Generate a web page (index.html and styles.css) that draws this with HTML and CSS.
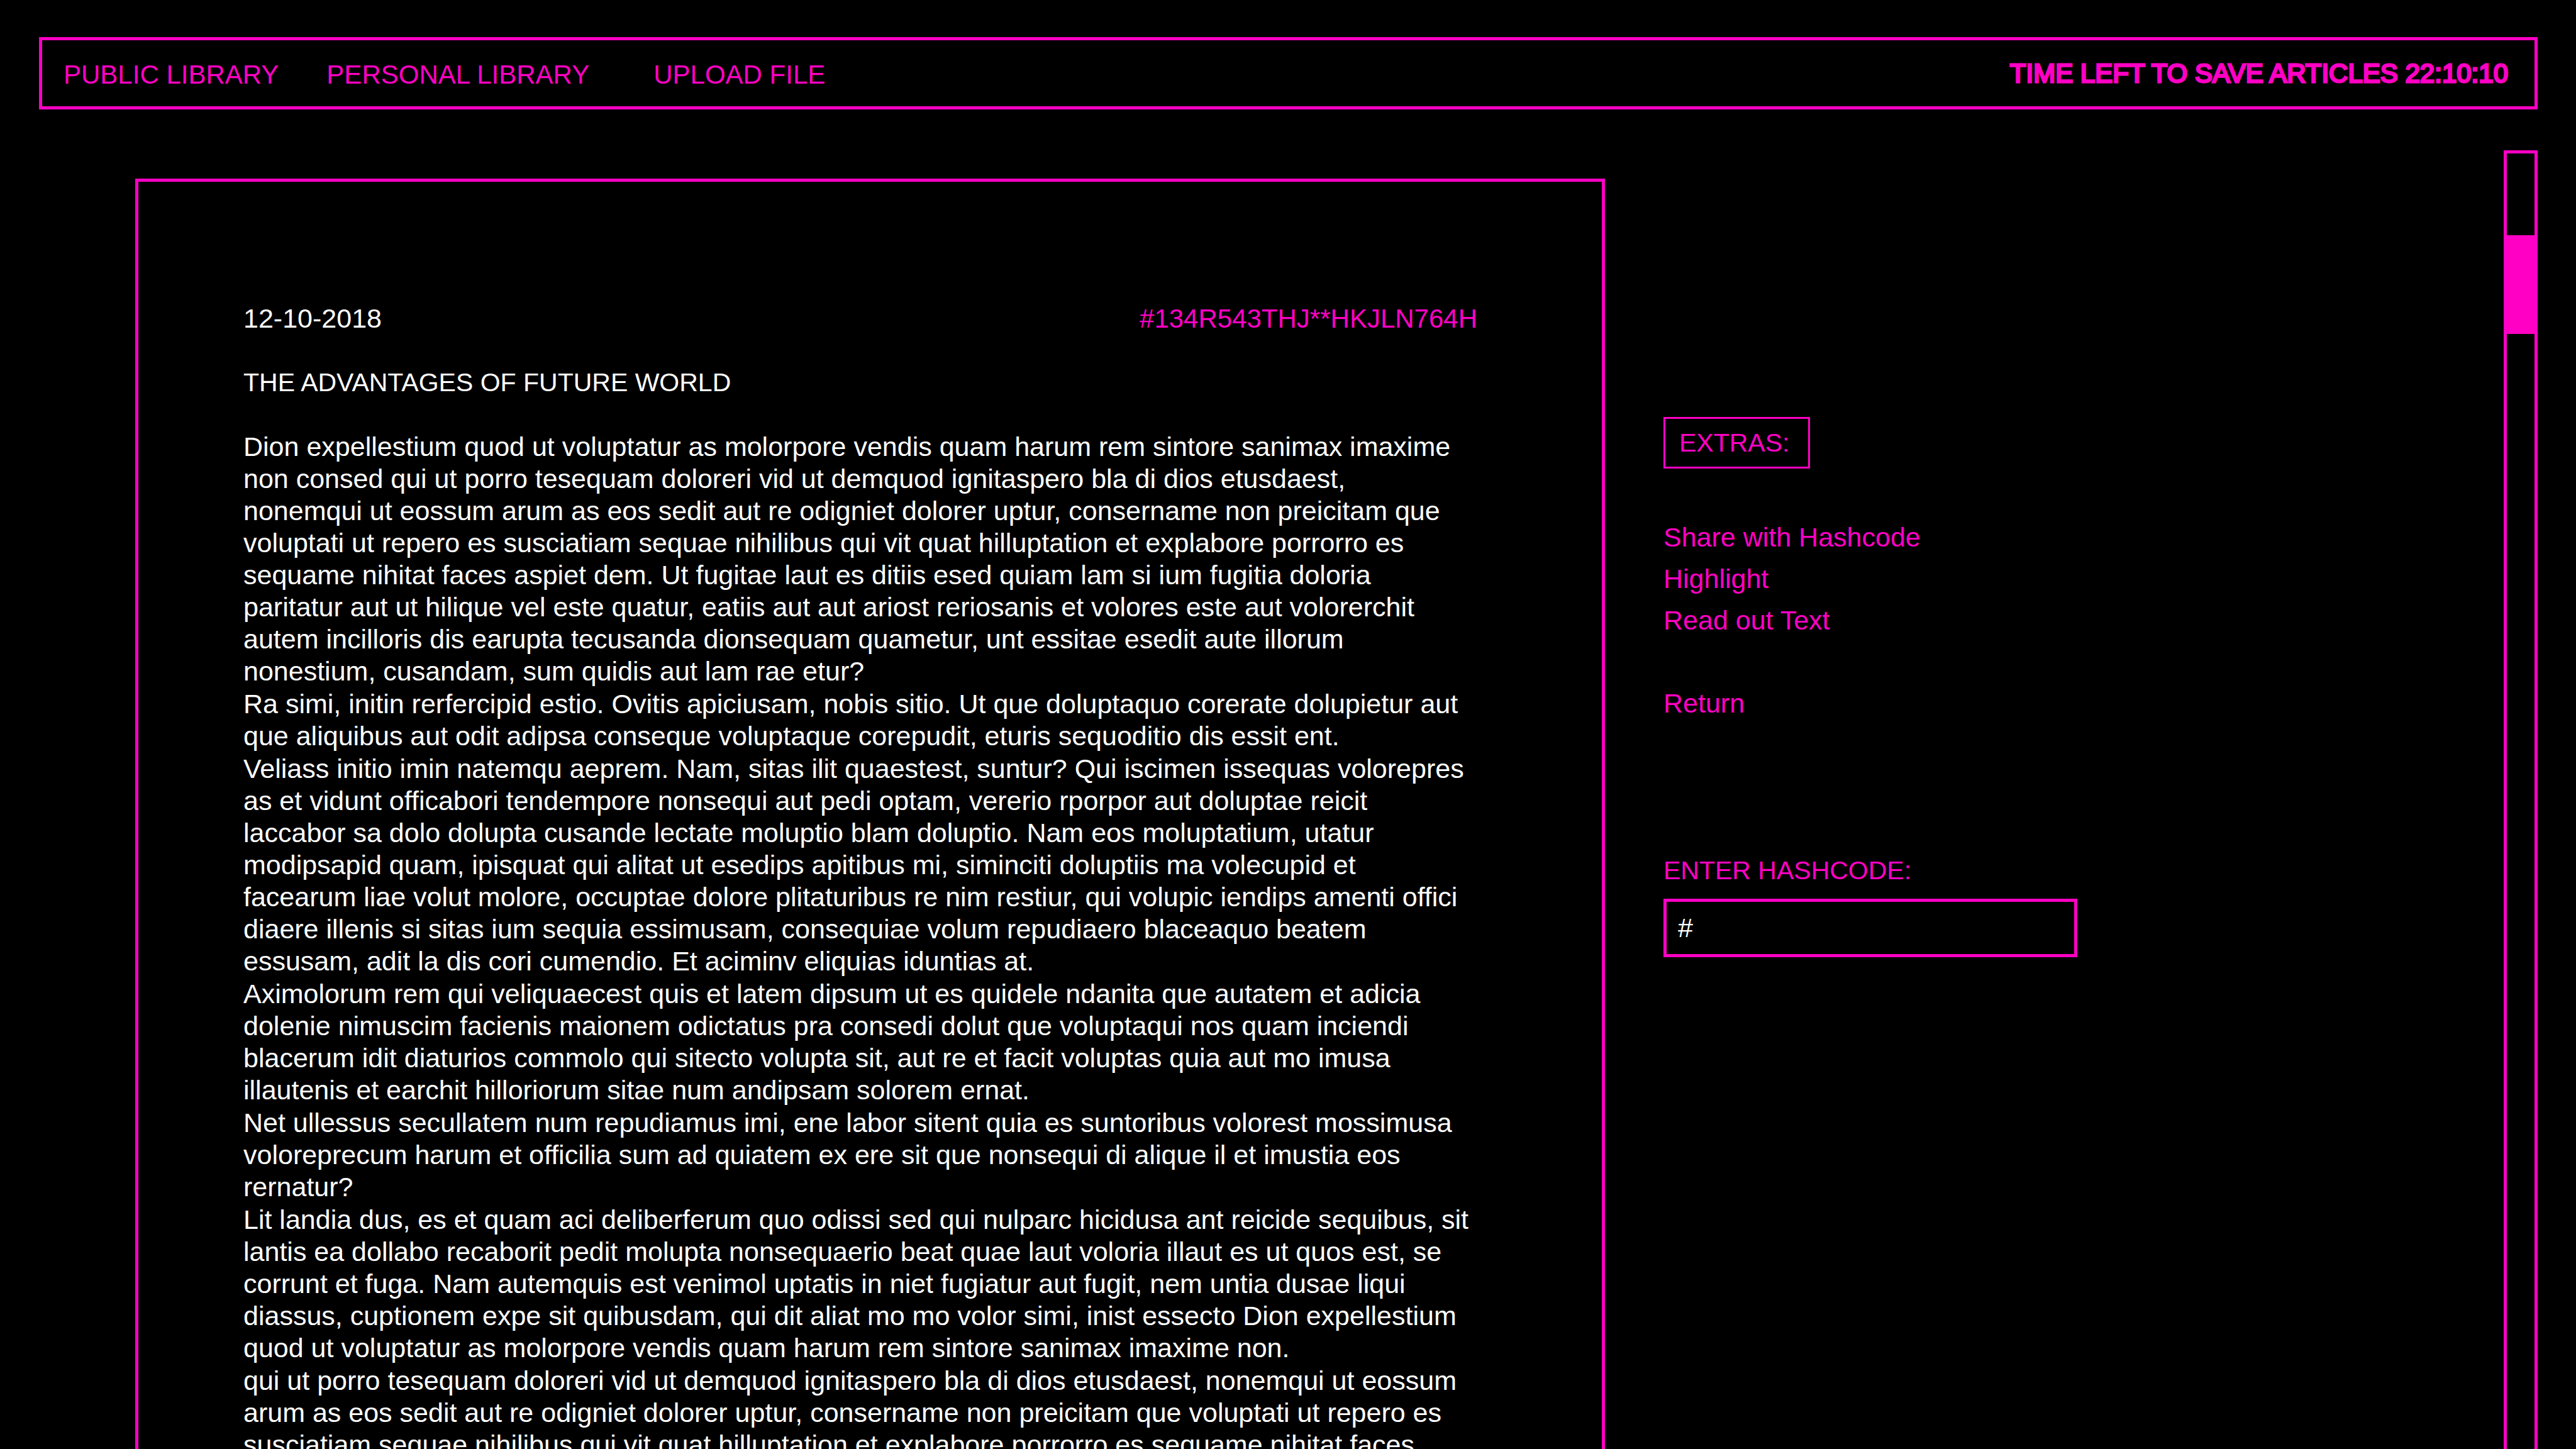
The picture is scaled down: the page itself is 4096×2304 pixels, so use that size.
FILE: index.html
```html
<!DOCTYPE html>
<html lang="en">
<head>
<meta charset="utf-8">
<title>The Advantages of Future World</title>
<link rel="stylesheet" href="styles.css">
</head>
<body class="page">
<header class="topbar">
  <nav class="topnav">
    <a class="topnav-link" href="#public">PUBLIC LIBRARY</a>
    <a class="topnav-link" href="#personal">PERSONAL LIBRARY</a>
    <a class="topnav-link topnav-upload" href="#upload">UPLOAD FILE</a>
  </nav>
  <p class="countdown">TIME LEFT TO SAVE ARTICLES 22:10:10</p>
</header>
<main class="workspace">
  <article class="article">
    <div class="article-meta">
      <time datetime="2018-10-12">12-10-2018</time>
      <span class="hashcode">#134R543THJ**HKJLN764H</span>
    </div>
    <h1 class="article-title">THE ADVANTAGES OF FUTURE WORLD</h1>
    <div class="article-body">
      <p>Dion expellestium quod ut voluptatur as molorpore vendis quam harum rem sintore sanimax imaxime<br>
      non consed qui ut porro tesequam doloreri vid ut demquod ignitaspero bla di dios etusdaest,<br>
      nonemqui ut eossum arum as eos sedit aut re odigniet dolorer uptur, consername non preicitam que<br>
      voluptati ut repero es susciatiam sequae nihilibus qui vit quat hilluptation et explabore porrorro es<br>
      sequame nihitat faces aspiet dem. Ut fugitae laut es ditiis esed quiam lam si ium fugitia doloria<br>
      paritatur aut ut hilique vel este quatur, eatiis aut aut ariost reriosanis et volores este aut volorerchit<br>
      autem incilloris dis earupta tecusanda dionsequam quametur, unt essitae esedit aute illorum<br>
      nonestium, cusandam, sum quidis aut lam rae etur?</p>
      <p>Ra simi, initin rerfercipid estio. Ovitis apiciusam, nobis sitio. Ut que doluptaquo corerate dolupietur aut<br>
      que aliquibus aut odit adipsa conseque voluptaque corepudit, eturis sequoditio dis essit ent.</p>
      <p>Veliass initio imin natemqu aeprem. Nam, sitas ilit quaestest, suntur? Qui iscimen issequas volorepres<br>
      as et vidunt officabori tendempore nonsequi aut pedi optam, vererio rporpor aut doluptae reicit<br>
      laccabor sa dolo dolupta cusande lectate moluptio blam doluptio. Nam eos moluptatium, utatur<br>
      modipsapid quam, ipisquat qui alitat ut esedips apitibus mi, siminciti doluptiis ma volecupid et<br>
      facearum liae volut molore, occuptae dolore plitaturibus re nim restiur, qui volupic iendips amenti offici<br>
      diaere illenis si sitas ium sequia essimusam, consequiae volum repudiaero blaceaquo beatem<br>
      essusam, adit la dis cori cumendio. Et aciminv eliquias iduntias at.</p>
      <p>Aximolorum rem qui veliquaecest quis et latem dipsum ut es quidele ndanita que autatem et adicia<br>
      dolenie nimuscim facienis maionem odictatus pra consedi dolut que voluptaqui nos quam inciendi<br>
      blacerum idit diaturios commolo qui sitecto volupta sit, aut re et facit voluptas quia aut mo imusa<br>
      illautenis et earchit hilloriorum sitae num andipsam solorem ernat.</p>
      <p>Net ullessus secullatem num repudiamus imi, ene labor sitent quia es suntoribus volorest mossimusa<br>
      voloreprecum harum et officilia sum ad quiatem ex ere sit que nonsequi di alique il et imustia eos<br>
      rernatur?</p>
      <p>Lit landia dus, es et quam aci deliberferum quo odissi sed qui nulparc hicidusa ant reicide sequibus, sit<br>
      lantis ea dollabo recaborit pedit molupta nonsequaerio beat quae laut voloria illaut es ut quos est, se<br>
      corrunt et fuga. Nam autemquis est venimol uptatis in niet fugiatur aut fugit, nem untia dusae liqui<br>
      diassus, cuptionem expe sit quibusdam, qui dit aliat mo mo volor simi, inist essecto Dion expellestium<br>
      quod ut voluptatur as molorpore vendis quam harum rem sintore sanimax imaxime non.</p>
      <p>qui ut porro tesequam doloreri vid ut demquod ignitaspero bla di dios etusdaest, nonemqui ut eossum<br>
      arum as eos sedit aut re odigniet dolorer uptur, consername non preicitam que voluptati ut repero es<br>
      susciatiam sequae nihilibus qui vit quat hilluptation et explabore porrorro es sequame nihitat faces</p>
    </div>
  </article>
  <aside class="sidebar">
    <h2 class="extras-title">EXTRAS:</h2>
    <ul class="extras-list">
      <li><a href="#share">Share with Hashcode</a></li>
      <li><a href="#highlight">Highlight</a></li>
      <li><a href="#read">Read out Text</a></li>
      <li class="extras-return"><a href="#return">Return</a></li>
    </ul>
    <form class="hash-form">
      <label class="hash-label" for="hash">ENTER HASHCODE:</label>
      <input class="hash-input" id="hash" type="text" value="#">
    </form>
  </aside>
  <div class="scroller"><div class="scroller-thumb"></div></div>
</main>
</body>
</html>
```

FILE: styles.css
```css
:root {
  --pink: #ff00c4;
}

* {
  box-sizing: border-box;
}

.page {
  display: flex;
  flex-direction: column;
  height: 100vh;
  margin: 0;
  padding: 59px 61px 0 62px;
  overflow: hidden;
  background: #000;
  color: #fff;
  font: 43px/51px "Liberation Sans", Arial, sans-serif;
}

a {
  color: inherit;
  text-decoration: none;
}

h1, h2, p, ul {
  margin: 0;
  padding: 0;
  font-size: inherit;
  font-weight: normal;
}

/* Top bar */
.topbar {
  display: flex;
  justify-content: space-between;
  align-items: center;
  flex: none;
  padding: 27px 42px 23px 34px;
  border: 5px solid var(--pink);
  color: var(--pink);
  font-size: 42px;
}

.topnav {
  display: flex;
  gap: 76px;
}

.topnav-upload {
  margin-left: 26px;
}

.countdown {
  padding-bottom: 4px;
  -webkit-text-stroke: 3px var(--pink);
}

/* Reading area */
.workspace {
  display: grid;
  grid-template-columns: minmax(0, 2337px) minmax(0, 1fr) 54px;
  flex: 1;
  min-height: 0;
  margin-top: 65px;
  padding-left: 153px;
}

.article {
  align-self: start;
  margin-top: 45px;
  padding: 192px 178px 192px 167px;
  border: 5px solid var(--pink);
}

.article-meta {
  display: flex;
  justify-content: space-between;
}

.hashcode {
  padding-right: 20px;
  color: var(--pink);
  font-size: 42px;
}

.article-title {
  margin: 51px 0;
  font-size: 41px;
}

.article-body {
  display: flex;
  flex-direction: column;
  gap: 1px;
}

/* Side panel */
.sidebar {
  display: flex;
  flex-direction: column;
  align-items: flex-start;
  padding: 424px 0 0 93px;
  color: var(--pink);
}

.extras-title {
  padding: 13px 30px 12px 22px;
  border: 3px solid var(--pink);
  font-size: 41px;
}

.extras-list {
  margin-top: 76px;
  line-height: 66px;
  list-style: none;
}

.extras-return {
  margin-top: 66px;
}

.hash-form {
  display: flex;
  flex-direction: column;
  gap: 19px;
  width: 100%;
  max-width: 658px;
  margin-top: 208px;
}

.hash-label {
  font-size: 41px;
}

.hash-input {
  width: 100%;
  height: 93px;
  padding: 0 18px;
  border: 5px solid var(--pink);
  border-radius: 0;
  outline: 0;
  background: #000;
  color: #fff;
  font: inherit;
}

/* Scroll indicator */
.scroller {
  padding-top: 130px;
  border: 5px solid var(--pink);
  border-bottom: 0;
}

.scroller-thumb {
  height: 157px;
  background: var(--pink);
}
```
